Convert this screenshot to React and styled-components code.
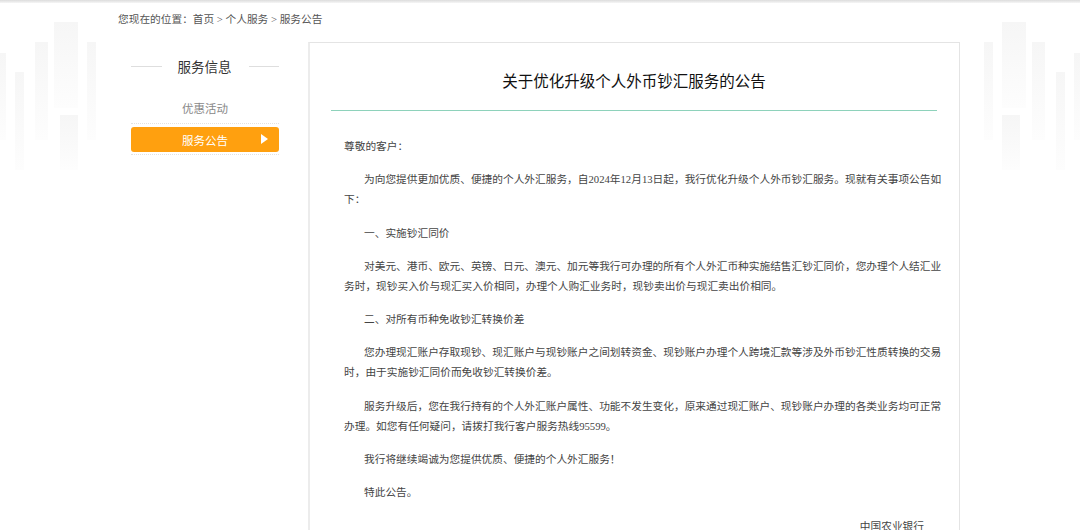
import React from "react";
import styled, { createGlobalStyle } from "styled-components";

const Global = createGlobalStyle`
  html, body { margin: 0; padding: 0; background: #fff; }
  body {
    font-family: "Liberation Serif", "Noto Sans CJK SC", serif;
    color: #444;
  }
`;

const Page = styled.div`
  position: relative;
  min-height: 530px;
  overflow: hidden;
`;

const TopEdge = styled.div`
  height: 3px;
  background: linear-gradient(#dcdcdc, #f6f6f6);
`;

const Decor = styled.svg`
  position: absolute;
  top: 0;
  ${(p) => (p.$side === "left" ? "left: 0;" : "right: 0;")}
  width: 100px;
  height: 280px;
  z-index: 0;
  pointer-events: none;
`;

const Container = styled.div`
  position: relative;
  z-index: 1;
  width: 844px;
  margin: 0 auto;
`;

const Breadcrumb = styled.div`
  font-size: 10.7px;
  line-height: 32px;
  color: #555;
  white-space: pre;
`;

const Main = styled.div`
  display: flex;
  align-items: flex-start;
  margin-top: 7px;
`;

const Sidebar = styled.aside`
  width: 148px;
  margin-left: 13px;
  padding-top: 14px;
`;

const SideTitle = styled.div`
  display: flex;
  align-items: center;
  height: 20px;
  font-family: "Noto Sans CJK SC", sans-serif;
  font-size: 13.5px;
  color: #333;
  &::before, &::after {
    content: "";
    flex: 1;
    height: 1px;
    background: #dedede;
  }
  span { margin: 0 17px 0 16px; }
`;

const Menu = styled.ul`
  list-style: none;
  margin: 17px 0 0;
  padding: 0;
`;

const MenuItem = styled.li`
  height: 30px;
  border-bottom: 1px dotted #e2e2e2;
  display: flex;
  align-items: center;
  justify-content: center;
  font-family: "Noto Sans CJK SC", sans-serif;
  font-size: 11.5px;
  color: #888;
`;

const ActiveItem = styled.div`
  position: relative;
  width: 100%;
  height: 25px;
  margin-top: 1px;
  border-radius: 3px;
  background: #ffa00f;
  color: #fff;
  display: flex;
  align-items: center;
  justify-content: center;
  &::after {
    content: "";
    position: absolute;
    right: 11px;
    top: 7px;
    border-left: 7px solid #fff;
    border-top: 5px solid transparent;
    border-bottom: 5px solid transparent;
  }
`;

const Panel = styled.section`
  margin-left: 29px;
  width: 652px;
  box-sizing: border-box;
  border: 1px solid #e4e4e4;
  border-left: 2px solid #ececec;
  background: #fff;
  padding: 0 22px 40px 21px;
`;

const Title = styled.h1`
  margin: 0;
  padding: 27px 0 16px;
  text-align: center;
  font-family: "Liberation Serif", "Noto Sans CJK SC", serif;
  font-size: 15.5px;
  line-height: 24px;
  font-weight: 400;
  color: #111;
  border-bottom: 1px solid #8ed2bb;
`;

const Article = styled.div`
  padding: 25px 13px 0;
  font-size: 10.7px;
  line-height: 20px;
  color: #444;
`;

const P = styled.p`
  margin: 0 0 13.3px;
  white-space: nowrap;
  text-indent: ${(p) => (p.$indent ? "20px" : "0")};
  text-align: ${(p) => (p.$right ? "right" : "left")};
`;

function Buildings({ side }) {
  const left = [
    [0, 53, 6, 87],
    [15, 72, 9, 98],
    [35, 42, 13, 98],
    [54, 22, 24, 86],
    [60, 115, 18, 55],
    [87, 42, 9, 98],
  ];
  const rects = side === "left" ? left : left.map(([x, y, w, h]) => [100 - x - w, y, w, h]);
  return (
    <Decor $side={side} viewBox="0 0 100 280">
      <defs>
        <linearGradient id={`fade-${side}`} x1="0" y1="0" x2="0" y2="1">
          <stop offset="0" stopColor="#f6f6f6" />
          <stop offset="1" stopColor="#fdfdfd" />
        </linearGradient>
      </defs>
      {rects.map(([x, y, w, h], i) => (
        <rect key={i} x={x} y={y} width={w} height={h} fill={`url(#fade-${side})`} />
      ))}
    </Decor>
  );
}

export default function App() {
  return (
    <Page>
      <Global />
      <TopEdge />
      <Buildings side="left" />
      <Buildings side="right" />
      <Container>
        <Breadcrumb>您现在的位置：首页 &gt; 个人服务 &gt; 服务公告</Breadcrumb>
        <Main>
          <Sidebar>
            <SideTitle><span>服务信息</span></SideTitle>
            <Menu>
              <MenuItem>优惠活动</MenuItem>
              <MenuItem><ActiveItem>服务公告</ActiveItem></MenuItem>
            </Menu>
          </Sidebar>
          <Panel>
            <Title>关于优化升级个人外币钞汇服务的公告</Title>
            <Article>
              <P>尊敬的客户：</P>
              <P $indent>
                为向您提供更加优质、便捷的个人外汇服务，自2024年12月13日起，我行优化升级个人外币钞汇服务。现就有关事项公告如
                <br />下：
              </P>
              <P $indent>一、实施钞汇同价</P>
              <P $indent>
                对美元、港币、欧元、英镑、日元、澳元、加元等我行可办理的所有个人外汇币种实施结售汇钞汇同价，您办理个人结汇业
                <br />务时，现钞买入价与现汇买入价相同，办理个人购汇业务时，现钞卖出价与现汇卖出价相同。
              </P>
              <P $indent>二、对所有币种免收钞汇转换价差</P>
              <P $indent>
                您办理现汇账户存取现钞、现汇账户与现钞账户之间划转资金、现钞账户办理个人跨境汇款等涉及外币钞汇性质转换的交易
                <br />时，由于实施钞汇同价而免收钞汇转换价差。
              </P>
              <P $indent>
                服务升级后，您在我行持有的个人外汇账户属性、功能不发生变化，原来通过现汇账户、现钞账户办理的各类业务均可正常
                <br />办理。如您有任何疑问，请拨打我行客户服务热线95599。
              </P>
              <P $indent>我行将继续竭诚为您提供优质、便捷的个人外汇服务！</P>
              <P $indent>特此公告。</P>
              <P $right>中国农业银行</P>
            </Article>
          </Panel>
        </Main>
      </Container>
    </Page>
  );
}
